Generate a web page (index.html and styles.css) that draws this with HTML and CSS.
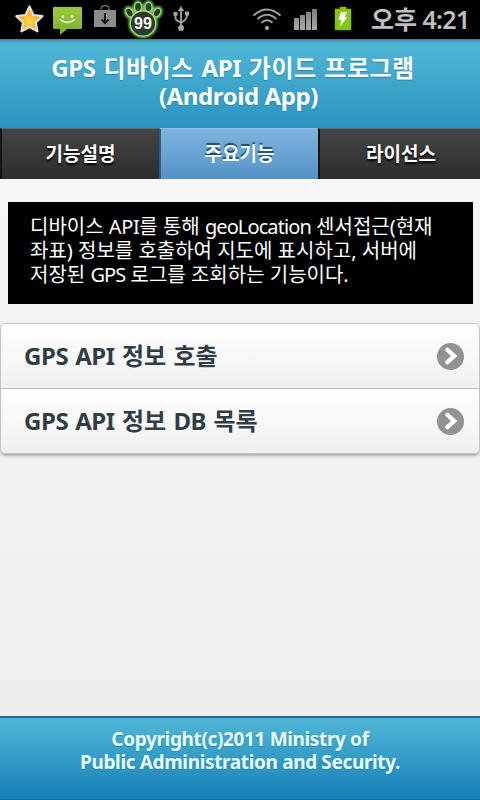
FILE: index.html
```
<!DOCTYPE html>
<html lang="ko">
<head>
<meta charset="utf-8">
<title>GPS 디바이스 API 가이드 프로그램</title>
<link rel="stylesheet" href="styles.css">
</head>
<body>
<div class="status">
  <svg class="icons" width="360" height="39" viewBox="0 0 360 39">
    <defs>
      <radialGradient id="star" cx=".5" cy=".6" r=".55"><stop offset="0" stop-color="#ffe14d"/><stop offset="1" stop-color="#f98a08"/></radialGradient>
      <linearGradient id="msg" x1="0" y1="0" x2="0" y2="1"><stop offset="0" stop-color="#9ccb3c"/><stop offset="1" stop-color="#79ad2b"/></linearGradient>
      <linearGradient id="bar" x1="0" y1="0" x2="0" y2="1"><stop offset="0" stop-color="#7c7c7c"/><stop offset="1" stop-color="#a8a8a8"/></linearGradient>
      <filter id="glow" x="-30%" y="-30%" width="160%" height="160%"><feGaussianBlur stdDeviation="1.2"/></filter>
    </defs>
    <path d="M29.500 6.500L33.400 15L42.500 16.200L35.800 22.400L37.500 31.300L29.500 27L21.500 31.300L23 22.400L16.300 16.200L25.500 15Z" fill="url(#star)" stroke="#e4dfe0" stroke-width="2.200" stroke-linejoin="round"/>
    <path d="M53 7H81Q82 7 82 8V28Q82 29 81 29H67L60 35V29H54Q53 29 53 28V8Q53 7 54 7Z" fill="url(#msg)"/>
    <circle cx="63" cy="16.500" r="1.300" fill="#fff"/><circle cx="72" cy="16.500" r="1.300" fill="#fff"/>
    <path d="M60 19.500Q67.500 25.500 75 19.500" fill="none" stroke="#fff" stroke-width="1.600"/>
    <path d="M101 11V9Q101 5.700 105 5.700T109 9V11" fill="none" stroke="#777" stroke-width="1.200"/>
    <path d="M94 10H116V27H94Z" fill="#8c8c8c"/>
    <path d="M105 13V23M101.500 19.500L105 23L108.500 19.500" fill="none" stroke="#151515" stroke-width="2"/>
    <g fill="#71c84b" stroke="#71c84b" stroke-width="3.500" filter="url(#glow)"><circle cx="143" cy="23.500" r="12.800"/><ellipse cx="129.500" cy="12.500" rx="3.500" ry="5" transform="rotate(-30 129.500 12.500)"/><ellipse cx="138" cy="7" rx="3.500" ry="5"/><ellipse cx="148.500" cy="7" rx="3.500" ry="5"/><ellipse cx="157" cy="12.500" rx="3.500" ry="5" transform="rotate(30 157 12.500)"/></g>
    <g fill="#30382e" stroke="#9fe07c" stroke-width="1.100"><ellipse cx="129.500" cy="12.500" rx="3.200" ry="4.600" transform="rotate(-30 129.500 12.500)"/><ellipse cx="138" cy="7" rx="3.400" ry="4.600"/><ellipse cx="148.500" cy="7" rx="3.400" ry="4.600"/><ellipse cx="157" cy="12.500" rx="3.200" ry="4.600" transform="rotate(30 157 12.500)"/><circle cx="143" cy="23.500" r="12.600"/></g>
    <text x="143" y="29" text-anchor="middle" class="badge">99</text>
    <g fill="none" stroke="#a2a2a2" stroke-width="1.800"><path d="M181 28V8M175.500 14V18Q175.500 20 178 21L181 23L185 20Q187 18.500 187 15"/></g>
    <g fill="#a2a2a2"><path d="M181 6L184.200 11H177.800Z"/><circle cx="181" cy="28" r="3"/><circle cx="175.500" cy="14" r="2.300"/><path d="M185 11.500H189V15.500H185Z"/></g>
    <g fill="none" stroke="#a0a0a0" stroke-width="1.900"><path d="M253.500 15.500Q267 3.500 280.500 15.500"/><path d="M257.500 19Q267 10.500 276.500 19"/><path d="M261.500 22.800Q267 17.500 272.500 22.800"/></g>
    <circle cx="267" cy="28" r="2" fill="#b0b0b0"/>
    <path d="M294 18H299V30H294ZM300 15H305V30H300ZM306 12H311V30H306ZM312 9H317V30H312Z" fill="url(#bar)"/>
    <path d="M335 8.500H340V7H346V8.500H351V30H335Z" fill="#78bd00" filter="url(#glow)" opacity=".6"/>
    <path d="M335 9H340V7H346V9H351V30H335Z" fill="#86c60a"/>
    <path d="M341 12H347L344.500 17H347.500L339.500 27L341.500 20H338.500Z" fill="#fff"/>
  </svg>
  <span class="clock">오후 <span class="time">4:21</span></span>
</div>
<header class="header">
  <h1><span class="line t1"><span class="en">GPS</span> 디바이스 <span class="en">API</span> 가이드 프로그램</span><span class="line t2 en">(Android App)</span></h1>
</header>
<nav class="tabs">
  <a class="tab">기능설명</a>
  <a class="tab active">주요기능</a>
  <a class="tab">라이선스</a>
</nav>
<main class="content">
  <p class="note"><span class="line">디바이스 <span class="en">API</span>를 통해 <span class="tight">geoLocation</span> 센서접근(현재</span><span class="line">좌표) 정보를 호출하여 지도에 표시하고, 서버에</span><span class="line">저장된 <span class="tight">GPS</span> 로그를 조회하는 기능이다.</span></p>
  <ul class="list">
    <li class="row"><span class="label"><span class="en">GPS API</span> 정보 호출</span><svg class="arrow" viewBox="0 0 26 26"><circle cx="13" cy="13" r="13" fill="#929292"/><path d="M10 6.500L16.500 12.500L10 18.500" fill="none" stroke="#fff" stroke-width="4.200" stroke-linecap="round"/></svg></li>
    <li class="row"><span class="label"><span class="en">GPS API</span> 정보 <span class="en">DB</span> 목록</span><svg class="arrow" viewBox="0 0 26 26"><circle cx="13" cy="13" r="13" fill="#929292"/><path d="M10 6.500L16.500 12.500L10 18.500" fill="none" stroke="#fff" stroke-width="4.200" stroke-linecap="round"/></svg></li>
  </ul>
</main>
<footer class="footer"><span class="line">Copyright(c)2011 Ministry of</span><span class="line">Public Administration and Security.</span></footer>
</body>
</html>
```
FILE: styles.css
```
* { box-sizing: border-box; }
body {
  margin: 0;
  width: 480px;
  height: 800px;
  overflow: hidden;
  display: flex;
  flex-direction: column;
  background: #eee;
  font-family: "Noto Sans", "Noto Sans CJK KR", sans-serif;
}
.line { display: block; }
.en { letter-spacing: -.4px; }
.tight { letter-spacing: -.9px; }
.status {
  height: 39px;
  background: #000;
  display: flex;
  flex: none;
}
.icons { flex: none; }
.badge { font: bold 16px "Liberation Sans", sans-serif; fill: #fff; }
.clock {
  margin-left: 11px;
  font-size: 25px;
  line-height: 39px;
  font-weight: 600;
  color: #bebebe;
  white-space: nowrap;
}
.time { letter-spacing: -.7px; margin-left: -1px; }
.header {
  flex: none;
  height: 89px;
  padding-top: 15px;
  background: linear-gradient(#357d96 0, #4aacca 3px, #4fb5d5 8px, #2a94c0 100%);
  text-align: center;
}
h1 {
  margin: 0;
  font-size: 24px;
  line-height: 28px;
  color: #fff;
  text-shadow: 0 1px 1px #2a84a8;
  white-space: nowrap;
}
.t1 { padding-right: 14px; letter-spacing: .5px; word-spacing: 1px; }
.t2 { padding-right: 3px; }
.tabs { display: flex; flex: none; height: 51px; }
.tab {
  flex: 0 0 159px;
  border-left: 2px solid #151515;
  border-top: 1px solid #666;
  background: linear-gradient(#444, #2d2d2d);
  color: #fff;
  font-size: 19px;
  font-weight: bold;
  line-height: 50px;
  text-align: center;
  text-shadow: 0 2px 2px #000;
}
.tab:last-child { flex: 1; padding-left: 2px; }
.active {
  border-left-color: #2b5d80;
  border-top-color: #98c2e5;
  background: linear-gradient(#81b3de, #5393c6);
  text-shadow: 0 -2px 1px #145072;
}
.content { flex: 1; padding-top: 23px; background: linear-gradient(#f6f6f6, #eee); }
.note {
  margin: 0 7px 19px 8px;
  height: 102px;
  padding: 13px 22px;
  background: #000;
  color: #fff;
  font-size: 20px;
  line-height: 24px;
  white-space: nowrap;
}
.list {
  margin: 0;
  padding: 0;
  list-style: none;
  border: 1px solid #c3c3c3;
  border-radius: 6px;
  overflow: hidden;
  box-shadow: 0 2px 3px #aaa;
}
.row {
  height: 64px;
  padding: 0 15px 0 23px;
  display: flex;
  align-items: center;
  justify-content: space-between;
  background: linear-gradient(#fff, #f0f0f0);
  color: #2f3e46;
  font-size: 24px;
  font-weight: bold;
  text-shadow: 0 1px 0 #fff;
}
.row + .row { height: 65px; border-top: 1px solid #c3c3c3; }
.label { line-height: 32px; padding-bottom: 1px; word-spacing: 1px; }
.arrow { width: 27px; height: 27px; }
.footer {
  flex: none;
  height: 84px;
  padding-top: 10px;
  border-top: 2px solid #10709f;
  border-bottom: 1px solid #10709f;
  background: linear-gradient(#51b6d6, #1580b8);
  color: #e8fdff;
  font-size: 19px;
  font-weight: bold;
  line-height: 23px;
  letter-spacing: -.36px;
  text-align: center;
  text-shadow: 0 1px 1px #2a84a8;
  white-space: nowrap;
}
```
